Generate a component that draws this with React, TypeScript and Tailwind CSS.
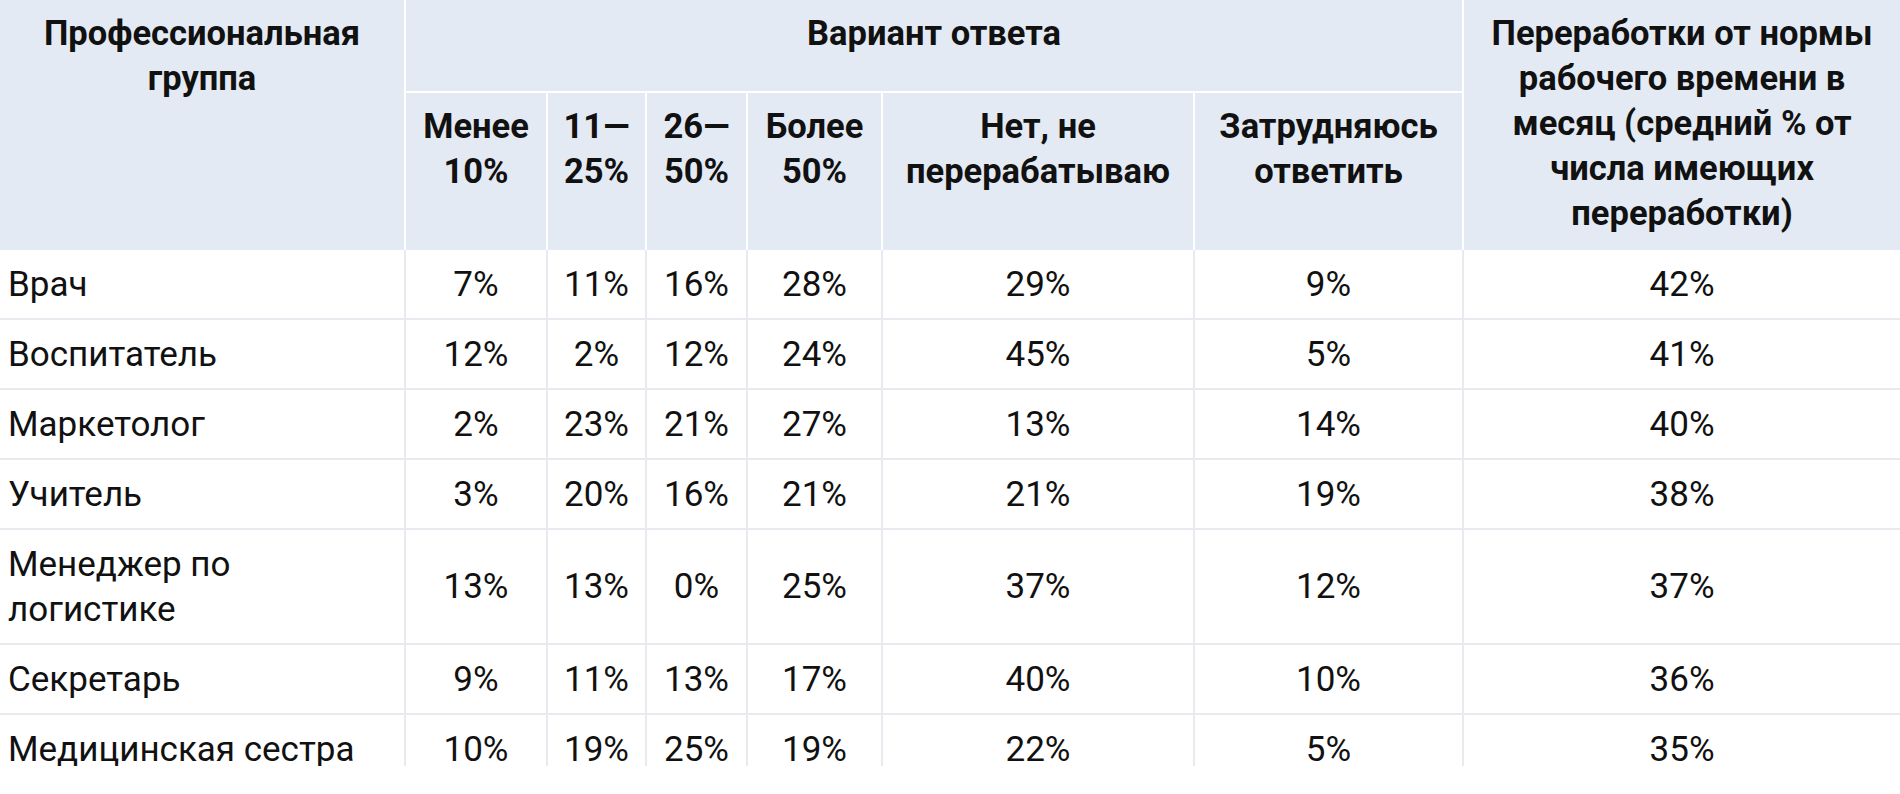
import React from "react";

type Row = { name: React.ReactNode; vals: string[]; tall?: boolean };

const rows: Row[] = [
  { name: "Врач", vals: ["7%", "11%", "16%", "28%", "29%", "9%", "42%"] },
  { name: "Воспитатель", vals: ["12%", "2%", "12%", "24%", "45%", "5%", "41%"] },
  { name: "Маркетолог", vals: ["2%", "23%", "21%", "27%", "13%", "14%", "40%"] },
  { name: "Учитель", vals: ["3%", "20%", "16%", "21%", "21%", "19%", "38%"] },
  {
    name: (
      <>
        Менеджер по
        <br />
        логистике
      </>
    ),
    vals: ["13%", "13%", "0%", "25%", "37%", "12%", "37%"],
    tall: true,
  },
  { name: "Секретарь", vals: ["9%", "11%", "13%", "17%", "40%", "10%", "36%"] },
  { name: "Медицинская сестра", vals: ["10%", "19%", "25%", "19%", "22%", "5%", "35%"] },
];

export default function App() {
  const th =
    "bg-[#e4eaf4] font-bold text-[34.5px] text-center align-top pt-[11px] px-[4px] whitespace-nowrap";
  return (
    <div className="w-[1900px] h-[794px] bg-white font-['Roboto',sans-serif] text-[35px] leading-[45px] text-[#111]">
      <div className="h-[766px] overflow-hidden">
        <table className="table-fixed border-separate border-spacing-0 w-[1900px]">
          <colgroup>
            <col className="w-[406px]" />
            <col className="w-[142px]" />
            <col className="w-[99px]" />
            <col className="w-[101px]" />
            <col className="w-[135px]" />
            <col className="w-[312px]" />
            <col className="w-[269px]" />
            <col className="w-[436px]" />
          </colgroup>
          <thead>
            <tr className="h-[93px]">
              <th rowSpan={2} className={`${th} border-r-2 border-white`}>
                Профессиональная
                <br />
                группа
              </th>
              <th colSpan={6} className={`${th} border-r-2 border-b-2 border-white`}>
                Вариант ответа
              </th>
              <th rowSpan={2} className={`${th}`}>
                Переработки от нормы
                <br />
                рабочего времени в
                <br />
                месяц (средний % от
                <br />
                числа имеющих
                <br />
                переработки)
              </th>
            </tr>
            <tr className="h-[157px]">
              <th className={`${th} border-r-2 border-white`}>
                Менее
                <br />
                10%
              </th>
              <th className={`${th} border-r-2 border-white`}>
                11—
                <br />
                25%
              </th>
              <th className={`${th} border-r-2 border-white`}>
                26—
                <br />
                50%
              </th>
              <th className={`${th} border-r-2 border-white`}>
                Более
                <br />
                50%
              </th>
              <th className={`${th} border-r-2 border-white`}>
                Нет, не
                <br />
                перерабатываю
              </th>
              <th className={`${th} border-r-2 border-white`}>
                Затрудняюсь
                <br />
                ответить
              </th>
            </tr>
          </thead>
          <tbody>
            {rows.map((r, i) => (
              <tr key={i} className={r.tall ? "h-[115px]" : "h-[70px]"}>
                <td className="text-left align-middle pl-[8px] pr-[4px] py-[11px] border-r-2 border-b-2 border-[#e8eaef] whitespace-nowrap">
                  {r.name}
                </td>
                {r.vals.map((v, j) => (
                  <td
                    key={j}
                    className={`text-center align-middle py-[11px] border-b-2 border-[#e8eaef] ${
                      j < r.vals.length - 1 ? "border-r-2" : ""
                    }`}
                  >
                    {v}
                  </td>
                ))}
              </tr>
            ))}
          </tbody>
        </table>
      </div>
    </div>
  );
}
